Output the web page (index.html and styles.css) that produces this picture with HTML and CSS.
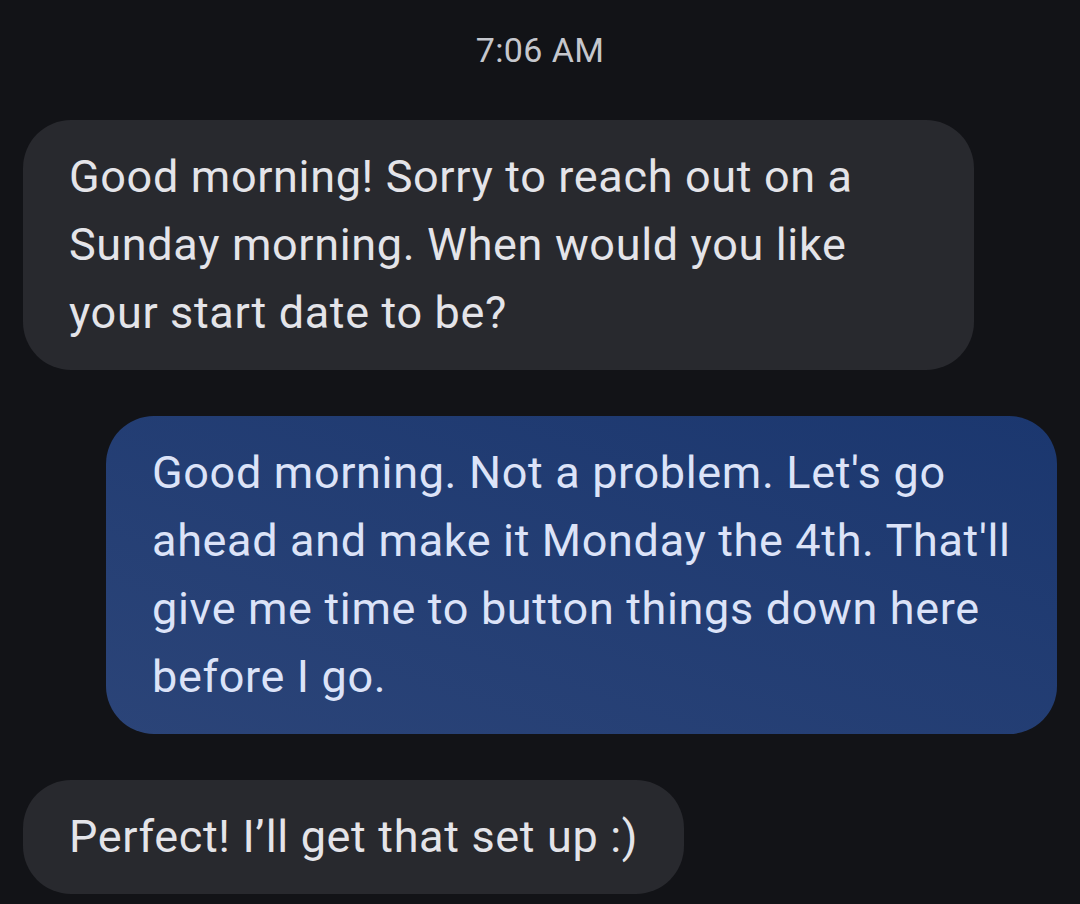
FILE: index.html
```html
<!DOCTYPE html>
<html>
<head>
<meta charset="utf-8">
<link rel="stylesheet" href="styles.css">
</head>
<body>
<main class="thread">
  <div class="time">7:06 AM</div>
  <div class="bubble in full">Good morning! Sorry to reach out on a<br>Sunday morning. When would you like<br>your start date to be?</div>
  <div class="bubble out full">Good morning. Not a problem. Let's go<br>ahead and make it Monday the 4th. That'll<br>give me time to button things down here<br>before I go.</div>
  <div class="bubble in">Perfect! I’ll get that set up :)</div>
</main>
</body>
</html>
```
FILE: styles.css
```css
html, body {
  margin: 0;
  padding: 0;
  background: #121317;
}
.thread {
  width: 1080px;
  height: 904px;
  box-sizing: border-box;
  padding: 30px 23px 0 23px;
  display: flex;
  flex-direction: column;
  gap: 46px;
  font-family: Roboto, "Noto Sans", sans-serif;
  overflow: hidden;
}
.time {
  text-align: center;
  color: #c5c7cd;
  font-size: 34px;
  letter-spacing: 0.4px;
  line-height: 40px;
  height: 40px;
  margin-bottom: 4px;
}
.bubble {
  box-sizing: border-box;
  padding: 23px 46px;
  border-radius: 48px;
  font-size: 45px;
  letter-spacing: 0.65px;
  line-height: 68px;
  white-space: nowrap;
  width: fit-content;
}
.bubble.full {
  width: 951px;
}
.in {
  align-self: flex-start;
  background: #28292e;
  color: #e4e4e9;
}
.out {
  align-self: flex-end;
  background: linear-gradient(to top right, #2b4478, #1b376f);
  color: #dce3f8;
}
```
